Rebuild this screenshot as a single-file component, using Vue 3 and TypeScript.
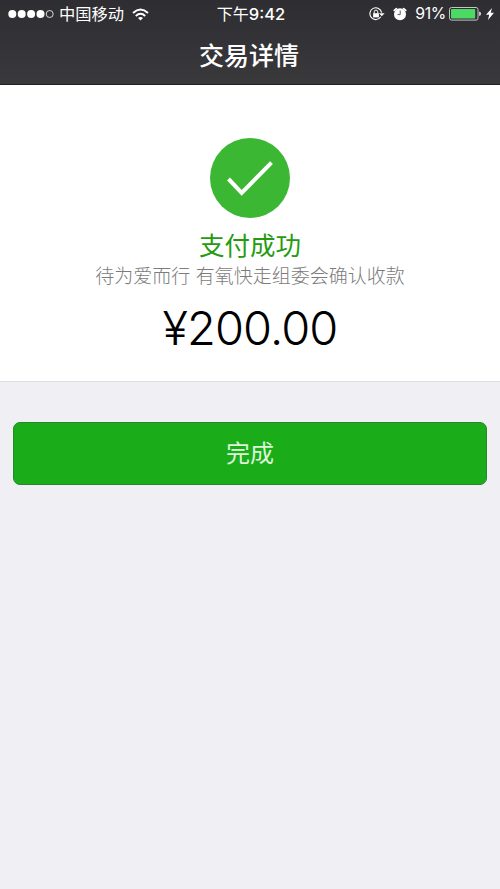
<script setup lang="ts">
const carrier = '中国移动'
const time = '9:42'
const battery = 91
const amount = '200.00'
</script>

<template>
  <div class="screen">
    <header class="header">
      <div class="status">
        <div class="left">
          <svg class="signal" width="47" height="10" viewBox="0 0 47 10">
            <circle v-for="i in 4" :key="i" :cx="4.3 + (i - 1) * 9.4" cy="5" r="4" fill="#fff" />
            <circle cx="41.7" cy="5" r="3.5" fill="none" stroke="#e8e8ea" stroke-width="0.9" />
          </svg>
          <span class="carrier">{{ carrier }}</span>
          <svg class="wifi" width="17" height="13" viewBox="0 0 17 13" fill="none" stroke="#fff" stroke-width="2">
            <path d="M1 4.9Q8.5 -1.9 16 4.9" />
            <path d="M3.8 7.9Q8.5 3.7 13.2 7.9" />
            <path d="M6 10.1Q8.5 8 11 10.1L8.5 12.6Z" fill="#fff" stroke="none" />
          </svg>
        </div>
        <span class="time">下午<span class="digits">{{ time }}</span></span>
        <div class="right">
          <svg class="lock" width="16" height="14" viewBox="0 0 16 14" fill="none" stroke="#fff">
            <path d="M11.8 9.8A5.9 5.9 0 1 1 12.6 5.6" stroke-width="1.1" />
            <path d="M10 6.2H15.6L12.8 9.3Z" fill="#fff" stroke="none" />
            <rect x="4.1" y="6.2" width="5.8" height="4.2" fill="#fff" stroke="none" />
            <path d="M5.2 6.5V4.9A1.8 1.8 0 0 1 8.8 4.9V6.5" />
          </svg>
          <svg class="alarm" width="14" height="14" viewBox="0 0 14 14">
            <circle cx="7" cy="7.3" r="6" fill="#fff" />
            <path d="M1.3 3.4L3.4 1.6M10.6 1.6L12.7 3.4" fill="none" stroke="#fff" stroke-width="1.8" stroke-linecap="round" />
            <path d="M7.2 3.6V7.6H4.6" fill="none" stroke="#55545a" stroke-width="1" />
          </svg>
          <span class="percent">{{ battery }}%</span>
          <svg class="battery" width="33" height="14" viewBox="0 0 33 14">
            <rect x="0.5" y="0.5" width="28.5" height="12.6" rx="2" fill="none" stroke="#c5c5c8" />
            <rect x="2" y="2" :width="25.5 * battery / 100 + 1" height="9.6" rx="0.8" fill="#4cd964" />
            <path d="M30.2 4.5Q32 5 32 6.8T30.2 9.1Z" fill="#e8e8ea" />
          </svg>
          <svg class="bolt" width="8" height="12" viewBox="0 0 8 12">
            <path d="M6 0L0 6.8H3.2L2 12L8 4.8H4.7Z" fill="#fff" />
          </svg>
        </div>
      </div>
      <h1 class="title">交易详情</h1>
    </header>

    <main>
      <section class="result">
        <svg class="check" width="80" height="80" viewBox="0 0 80 80">
          <circle cx="40" cy="40" r="40" fill="#3cb733" />
          <path d="M18.5 41L31.7 54.8L61.5 24.7" fill="none" stroke="#fff" stroke-width="4" />
        </svg>
        <h2 class="success">支付成功</h2>
        <p class="note">待为爱而行 有氧快走组委会确认收款</p>
        <p class="amount"><span class="yen">¥</span>{{ amount }}</p>
      </section>
      <div class="actions">
        <button class="done" type="button">完成</button>
      </div>
    </main>
  </div>
</template>

<style>
body {
  margin: 0;
  background: #efeff4;
}
</style>

<style scoped>
.screen {
  min-height: 889px;
  background: #efeff4;
  font-family: "Liberation Sans", "Noto Sans CJK SC", sans-serif;
}
.header {
  box-sizing: border-box;
  height: 85px;
  background: linear-gradient(#2e2d32, #39393c);
  border-bottom: 1px solid #202022;
  color: #fff;
}
.status {
  display: grid;
  grid-template-columns: 1fr auto 1fr;
  align-items: center;
  height: 28px;
  padding: 0 6px 0 8px;
  font-family: Inter, "Noto Sans CJK SC", sans-serif;
  font-size: 16px;
  line-height: 28px;
}
.left,
.right {
  display: flex;
  align-items: center;
}
.right {
  justify-content: flex-end;
}
.carrier {
  margin-left: 4px;
  font-size: 16.3px;
}
.wifi {
  margin-left: 8px;
}
.digits {
  font-size: 16.5px;
  font-weight: 500;
}
.alarm {
  margin-left: 8px;
}
.percent {
  margin-left: 8px;
  font-size: 15.8px;
  letter-spacing: -0.3px;
}
.battery {
  margin-left: 3px;
}
.bolt {
  margin-left: 4px;
}
.title {
  margin: 0;
  padding-right: 2px;
  font-size: 25px;
  font-weight: 500;
  line-height: 56px;
  text-align: center;
}
.result {
  box-sizing: border-box;
  display: flex;
  flex-direction: column;
  align-items: center;
  height: 297px;
  padding-top: 53px;
  background: #fff;
  border-bottom: 1px solid #dedee1;
}
.success {
  margin: 10px 0 0;
  color: #259b10;
  font-size: 25.5px;
  font-weight: 400;
  line-height: 36px;
}
.note {
  margin: 0;
  color: #7c7c7c;
  font-size: 19px;
  font-weight: 300;
  line-height: 26px;
  white-space: nowrap;
}
.amount {
  margin: 8px 0 0;
  color: #000;
  font-family: Inter, sans-serif;
  font-size: 47px;
  font-weight: 300;
  letter-spacing: -0.9px;
  line-height: 60px;
}
.actions {
  padding: 40px 13px 0;
}
.done {
  display: block;
  box-sizing: border-box;
  width: 100%;
  height: 63px;
  padding: 0;
  border: 1px solid #26872b;
  border-radius: 7px;
  background: #1aad19;
  color: #dcf5d8;
  font-family: inherit;
  font-size: 24px;
  line-height: 61px;
}
</style>
